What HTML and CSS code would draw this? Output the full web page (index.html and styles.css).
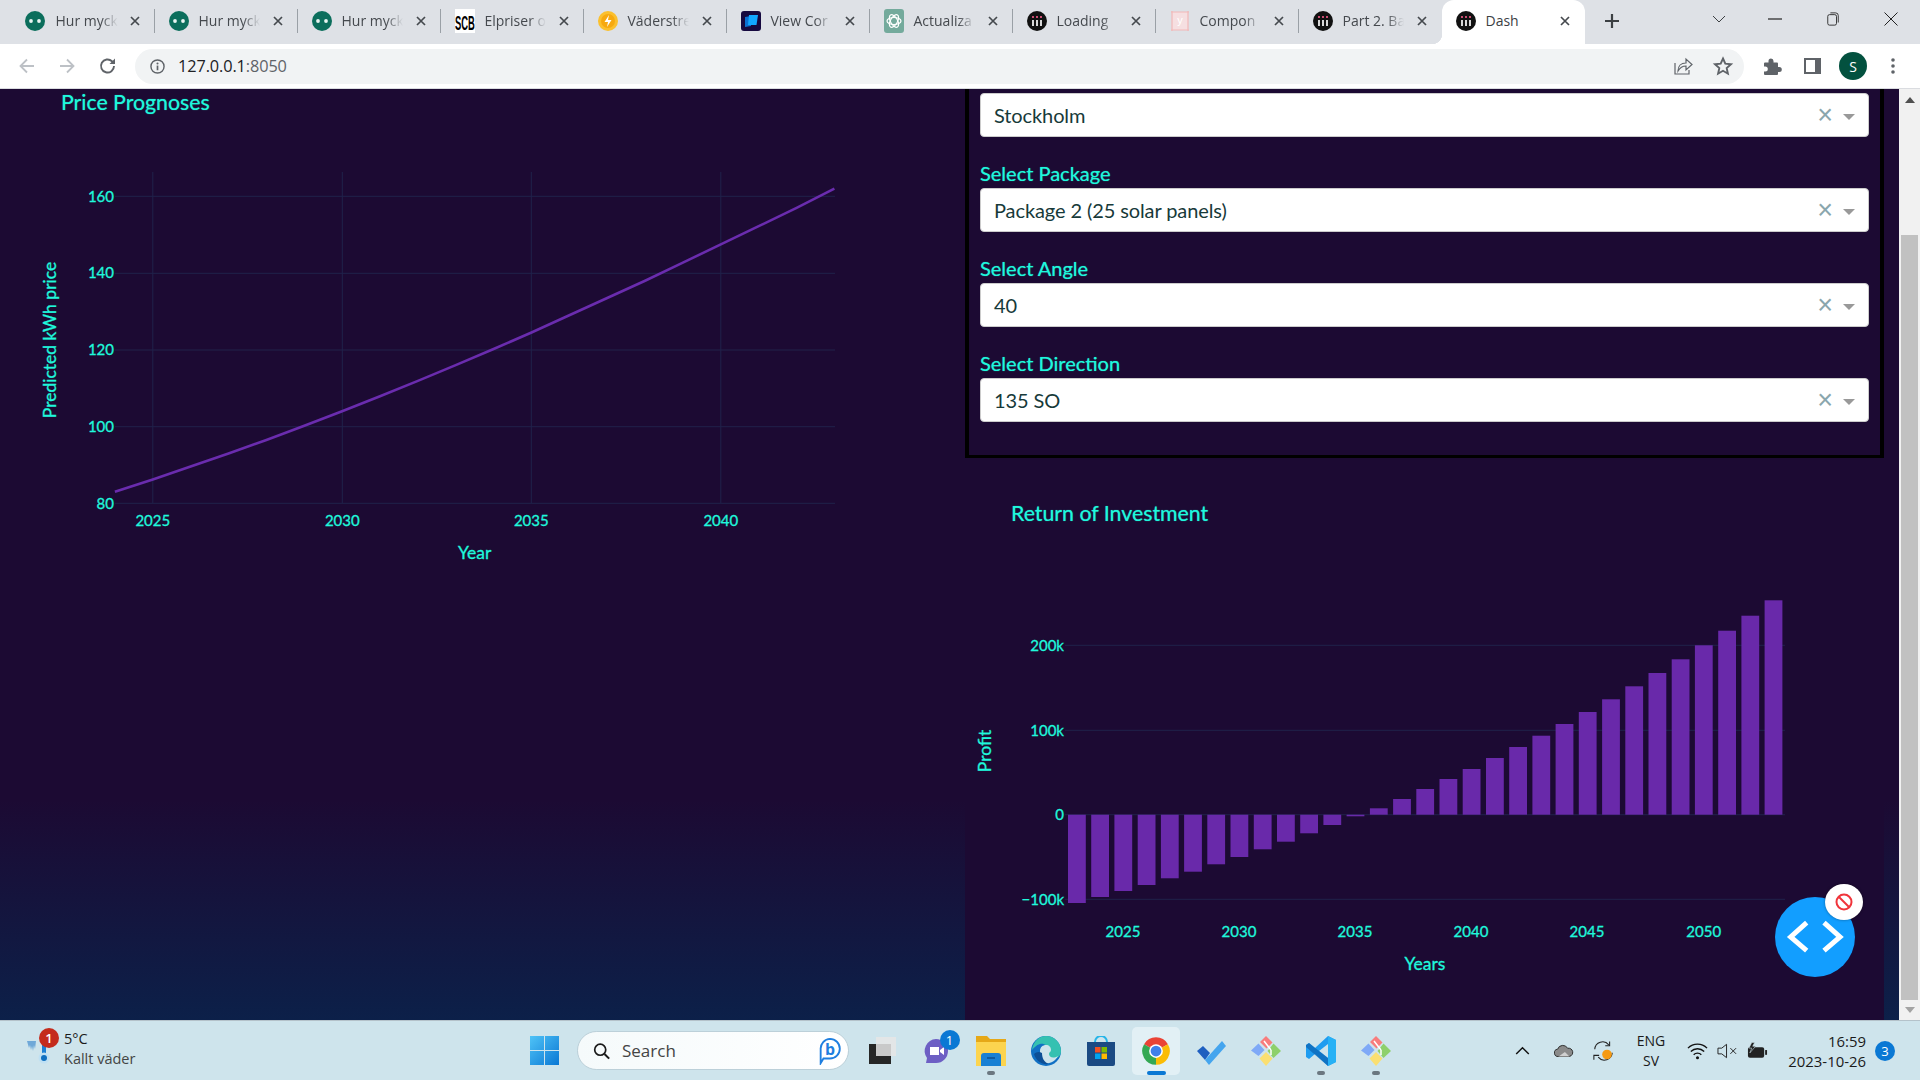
FILE: index.html
```html
<!DOCTYPE html>
<html lang="sv">
<head>
<meta charset="utf-8">
<title>Dash</title>
<link rel="stylesheet" href="styles.css">
</head>
<body>
<svg class="sprite" aria-hidden="true">
  <symbol id="i-robot" viewBox="0 0 20 20"><circle cx="10" cy="10" r="10" fill="#0b6e5c"/><circle cx="6" cy="10" r="1.900" fill="#e8f5f2"/><circle cx="14" cy="10" r="1.900" fill="#e8f5f2"/></symbol>
  <symbol id="i-dash" viewBox="0 0 20 20"><circle cx="10" cy="10" r="10" fill="#111"/><path d="M6 9v6M10 9v6M14 9v6" stroke="#eee" stroke-width="1.800"/><path d="M6 5v2M10 5v2M14 5v2" stroke="#e0557f" stroke-width="1.800"/></symbol>
  <symbol id="i-close" viewBox="0 0 10 10"><path d="M1 1l8 8M9 1l-8 8" stroke="#45494e" stroke-width="1.700"/></symbol>
  <symbol id="i-git" viewBox="0 0 30 30">
    <path d="M15 0l6.500 6.500-6 6-6.500-6.500z" fill="#f87d7d"/><path d="M7.500 7.500l6 6.500-6 6L0 14.500z" fill="#7fa9f7"/><path d="M22.500 7.500L30 15l-7.500 7-6-7z" fill="#8ed06b"/><path d="M15 16l6.500 6.500L15 30l-6.500-7.500z" fill="#fadf72"/>
    <path d="M13 5l7 9M20 14v5" stroke="#fff" stroke-width="1.500"/>
  </symbol>
</svg>

<div class="app">
  <header class="tabbar">
    <div class="tab tab-first"><svg class="fav"><use href="#i-robot"/></svg><span class="tab-title">Hur myck</span><svg class="tab-x"><use href="#i-close"/></svg></div>
    <div class="tab"><svg class="fav"><use href="#i-robot"/></svg><span class="tab-title">Hur myck</span><svg class="tab-x"><use href="#i-close"/></svg></div>
    <div class="tab"><svg class="fav"><use href="#i-robot"/></svg><span class="tab-title">Hur myck</span><svg class="tab-x"><use href="#i-close"/></svg></div>
    <div class="tab"><svg class="fav" viewBox="0 0 20 24"><rect width="20" height="24" fill="#fff"/><text class="scb" x="0" y="9.500" transform="scale(1 2.200)">SCB</text></svg><span class="tab-title">Elpriser o</span><svg class="tab-x"><use href="#i-close"/></svg></div>
    <div class="tab"><svg class="fav" viewBox="0 0 20 20"><circle cx="10" cy="10" r="10" fill="#fbc02d"/><circle cx="10" cy="10" r="7" fill="#f7a90f"/><path d="M11 4l-4.500 7H10l-1 5 4.500-7H10z" fill="#fff"/></svg><span class="tab-title">Väderstre</span><svg class="tab-x"><use href="#i-close"/></svg></div>
    <div class="tab"><svg class="fav" viewBox="0 0 20 20"><rect width="20" height="20" rx="3" fill="#16093f"/><path d="M4 6l6-1v10l-6 1z" fill="#0b6fd0"/><path d="M8 4h9l-1.500 10H7z" fill="#11a6ff"/></svg><span class="tab-title">View Cor</span><svg class="tab-x"><use href="#i-close"/></svg></div>
    <div class="tab"><svg class="fav" viewBox="0 0 20 24"><rect width="20" height="24" rx="3" fill="#74aa9c"/><g fill="none" stroke="#fff" stroke-width="1.200"><ellipse cx="10" cy="12" rx="7" ry="3.500"/><ellipse cx="10" cy="12" rx="7" ry="3.500" transform="rotate(60 10 12)"/><ellipse cx="10" cy="12" rx="7" ry="3.500" transform="rotate(120 10 12)"/></g></svg><span class="tab-title">Actualiza</span><svg class="tab-x"><use href="#i-close"/></svg></div>
    <div class="tab"><svg class="fav"><use href="#i-dash"/></svg><span class="tab-title">Loading</span><svg class="tab-x"><use href="#i-close"/></svg></div>
    <div class="tab"><svg class="fav" viewBox="0 0 20 24"><rect x="2" y="3" width="16" height="18" fill="#f6dfe1"/><path d="M1 3h18M1 21h18M2 2v20M18 2v20" stroke="#f2b8b8" stroke-width="1.200"/><text class="fav-y" x="10" y="15">y</text></svg><span class="tab-title">Compon</span><svg class="tab-x"><use href="#i-close"/></svg></div>
    <div class="tab tab-before-active"><svg class="fav"><use href="#i-dash"/></svg><span class="tab-title">Part 2. Ba</span><svg class="tab-x"><use href="#i-close"/></svg></div>
    <div class="tab tab-active"><svg class="fav"><use href="#i-dash"/></svg><span class="tab-title">Dash</span><svg class="tab-x"><use href="#i-close"/></svg></div>
    <svg class="newtab" viewBox="0 0 16 16"><path d="M8 1v14M1 8h14" stroke="#3c4043" stroke-width="2.200"/></svg>
    <div class="win">
      <svg class="win-chev" viewBox="0 0 14 8"><path d="M1 1l6 6 6-6" fill="none" stroke="#3c4043"/></svg>
      <span class="win-btn"><svg viewBox="0 0 14 14"><path d="M0 7h14" stroke="#222" stroke-width="1.200"/></svg></span>
      <span class="win-btn"><svg viewBox="0 0 14 16"><rect x="1" y="3" width="10" height="12" rx="2" fill="none" stroke="#222"/><path d="M4 1h6a3 3 0 0 1 3 3v8" fill="none" stroke="#222"/></svg></span>
      <span class="win-btn"><svg viewBox="0 0 14 14"><path d="M0.500 0.500l13 13M13.500 0.500l-13 13" stroke="#222"/></svg></span>
    </div>
  </header>

  <nav class="toolbar">
    <svg class="nav-ic" viewBox="0 0 20 20"><path d="M17 10H4M10 3.500L3.500 10l6.500 6.500" fill="none" stroke="#bdc1c6" stroke-width="1.800"/></svg>
    <svg class="nav-ic" viewBox="0 0 20 20"><path d="M3 10h13M10 3.500l6.500 6.500-6.500 6.500" fill="none" stroke="#bdc1c6" stroke-width="1.800"/></svg>
    <svg class="nav-ic nav-reload" viewBox="0 0 20 20"><path d="M16 10a6.500 6.500 0 1 1-2-4.700L16.500 7.500" fill="none" stroke="#5f6368" stroke-width="1.900"/><path d="M17 2.500V8h-5.500z" fill="#5f6368"/></svg>
    <div class="omnibox">
      <svg class="info" viewBox="0 0 16 16"><circle cx="8" cy="8" r="7" fill="none" stroke="#5f6368" stroke-width="1.500"/><path d="M8 7v5" stroke="#5f6368" stroke-width="1.800"/><circle cx="8" cy="4.700" r="1.100" fill="#5f6368"/></svg>
      <span class="url">127.0.0.1<span class="url-port">:8050</span></span>
      <svg class="omni-ic omni-first" viewBox="0 0 20 20"><path d="M2 7v11h14v-4" fill="none" stroke="#5f6368" stroke-width="1.200"/><path d="M5 15c0-5 3-8 8-8V3l6 5.500-6 5.500v-4c-3.500 0-6 1.500-8 5z" fill="none" stroke="#5f6368" stroke-width="1.200"/></svg>
      <svg class="omni-ic" viewBox="0 0 20 20"><path d="M10 2.500l2.300 5.200 5.700.6-4.300 3.800 1.200 5.600L10 14.800l-4.900 2.900 1.200-5.600L2 8.300l5.700-.6z" fill="none" stroke="#5f6368" stroke-width="1.900"/></svg>
    </div>
    <div class="tool-right">
      <svg class="tool-ic" viewBox="0 0 20 20"><path d="M2 7.500a1 1 0 0 1 1-1h3.500V5a2.500 2.500 0 0 1 5 0v1.500H15a1 1 0 0 1 1 1V11h1.300a2.500 2.500 0 0 1 0 5H16v2a1 1 0 0 1-1 1H3a1 1 0 0 1-1-1v-2.500h1.300a2.500 2.500 0 0 0 0-5H2z" fill="#5f6368"/></svg>
      <svg class="tool-ic" viewBox="0 0 20 20"><rect x="2" y="2" width="17" height="16" fill="#5f6368"/><rect x="4" y="4" width="9" height="12" fill="#fff"/></svg>
      <span class="avatar">S</span>
      <svg class="tool-ic" viewBox="0 0 20 20"><circle cx="10" cy="4" r="1.800" fill="#5f6368"/><circle cx="10" cy="10" r="1.800" fill="#5f6368"/><circle cx="10" cy="16" r="1.800" fill="#5f6368"/></svg>
    </div>
  </nav>

  <main class="viewport">
    <div class="page">
      <section class="col-left">
        <h3 class="chart-title title-left">Price Prognoses</h3>
        <svg class="chart-line" viewBox="0 117 965 500" role="img">
          <g class="grid">
            <path d="M115 196.300H835M115 273.300H835M115 350H835M115 426.700H835M115 503.300H835"/>
            <path d="M152.800 172V503.300M342.300 172V503.300M531.300 172V503.300M720.800 172V503.300"/>
          </g>
          <polyline class="trend" points="114.900,491.800 152.800,479.500 190.600,466.500 228.500,453.400 266.400,440 304.300,425.800 342.100,411.200 380,396.200 417.900,380.900 455.700,365.100 493.600,349 531.500,332.500 569.300,315.200 607.200,298 645.100,280.700 682.900,262.700 720.800,244.300 758.700,226.200 796.600,207.800 834.400,188.600"/>
          <g class="tick tick-y">
            <text x="114" y="201.500">160</text><text x="114" y="278">140</text><text x="114" y="355">120</text><text x="114" y="432">100</text><text x="114" y="508.500">80</text>
          </g>
          <g class="tick tick-x">
            <text x="152.800" y="526">2025</text><text x="342.300" y="526">2030</text><text x="531.300" y="526">2035</text><text x="720.800" y="526">2040</text>
          </g>
          <text class="axis" x="474.700" y="559">Year</text>
          <text class="axis" transform="translate(56 340) rotate(-90)">Predicted kWh price</text>
        </svg>
      </section>

      <section class="col-right">
        <div class="panel">
          <div class="select"><span>Stockholm</span><span class="select-x">×</span><span class="select-caret"></span></div>
          <label class="select-label">Select Package</label>
          <div class="select"><span>Package 2 (25 solar panels)</span><span class="select-x">×</span><span class="select-caret"></span></div>
          <label class="select-label">Select Angle</label>
          <div class="select"><span>40</span><span class="select-x">×</span><span class="select-caret"></span></div>
          <label class="select-label">Select Direction</label>
          <div class="select"><span>135 SO</span><span class="select-x">×</span><span class="select-caret"></span></div>
        </div>
        <h3 class="chart-title title-right">Return of Investment</h3>
        <svg class="chart-bars" viewBox="965 528 919 470" role="img">
          <g class="grid">
            <path d="M1065 645.300H1785M1065 730.300H1785M1065 814.700H1785M1065 899.300H1785"/>
          </g>
          <g class="bars">
            <rect x="1068" y="814.700" width="17.800" height="88.300"/>
            <rect x="1091.200" y="814.700" width="17.800" height="82.300"/>
            <rect x="1114.400" y="814.700" width="17.800" height="76.300"/>
            <rect x="1137.700" y="814.700" width="17.800" height="70.300"/>
            <rect x="1160.900" y="814.700" width="17.800" height="63.600"/>
            <rect x="1184.100" y="814.700" width="17.800" height="57"/>
            <rect x="1207.300" y="814.700" width="17.800" height="49.600"/>
            <rect x="1230.500" y="814.700" width="17.800" height="42.300"/>
            <rect x="1253.800" y="814.700" width="17.800" height="34.600"/>
            <rect x="1277" y="814.700" width="17.800" height="27"/>
            <rect x="1300.200" y="814.700" width="17.800" height="18.600"/>
            <rect x="1323.400" y="814.700" width="17.800" height="10.300"/>
            <rect x="1346.600" y="814.700" width="17.800" height="1.600"/>
            <rect x="1369.900" y="808.300" width="17.800" height="6.400"/>
            <rect x="1393.100" y="799" width="17.800" height="15.700"/>
            <rect x="1416.300" y="789" width="17.800" height="25.700"/>
            <rect x="1439.500" y="779" width="17.800" height="35.700"/>
            <rect x="1462.700" y="769" width="17.800" height="45.700"/>
            <rect x="1486" y="758" width="17.800" height="56.700"/>
            <rect x="1509.200" y="747" width="17.800" height="67.700"/>
            <rect x="1532.400" y="735.700" width="17.800" height="79"/>
            <rect x="1555.600" y="724" width="17.800" height="90.700"/>
            <rect x="1578.800" y="712" width="17.800" height="102.700"/>
            <rect x="1602.100" y="699.300" width="17.800" height="115.400"/>
            <rect x="1625.300" y="686.300" width="17.800" height="128.400"/>
            <rect x="1648.500" y="673" width="17.800" height="141.700"/>
            <rect x="1671.700" y="659.300" width="17.800" height="155.400"/>
            <rect x="1694.900" y="645.300" width="17.800" height="169.400"/>
            <rect x="1718.200" y="630.700" width="17.800" height="184"/>
            <rect x="1741.400" y="615.700" width="17.800" height="199"/>
            <rect x="1764.600" y="600.300" width="17.800" height="214.400"/>
          </g>
          <g class="tick tick-y">
            <text x="1064" y="650.500">200k</text><text x="1064" y="735.500">100k</text><text x="1064" y="820">0</text><text x="1064" y="904.500">−100k</text>
          </g>
          <g class="tick tick-x">
            <text x="1123" y="937">2025</text><text x="1239" y="937">2030</text><text x="1355" y="937">2035</text><text x="1471" y="937">2040</text><text x="1587" y="937">2045</text><text x="1703.700" y="937">2050</text>
          </g>
          <text class="axis" x="1425" y="970">Years</text>
          <text class="axis" transform="translate(991 751) rotate(-90)">Profit</text>
        </svg>
      </section>
      <div class="gutter"></div>
    </div>

    <aside class="scrollbar">
      <span class="sb-up"></span>
      <span class="sb-thumb"></span>
      <span class="sb-down"></span>
    </aside>

    <div class="fab">
      <svg class="fab-code" viewBox="0 0 80 80"><path d="M31.700 25.700L15.700 40l16 13.700M49 25.700L65 40 49 53.700" fill="none" stroke="#fff" stroke-width="5"/></svg>
      <span class="fab-chip"><svg viewBox="0 0 20 20"><circle cx="10" cy="10" r="7.500" fill="none" stroke="#f0353b" stroke-width="2"/><path d="M5 5l10 10" stroke="#f0353b" stroke-width="2"/></svg></span>
    </div>
  </main>

  <footer class="taskbar">
    <div class="weather">
      <div class="weather-icon">
        <svg viewBox="0 0 24 44"><path d="M0 12h9l-1 8-1-4-1 6-1-5-1 4-1-5-1 3z" fill="#6fa8d8"/><rect x="15" y="10" width="4" height="18" fill="#1b7fd4"/><circle cx="17" cy="29" r="5.500" fill="#bfe0f3"/><circle cx="17" cy="29" r="3" fill="#0f6fc0"/></svg>
        <span class="weather-badge">1</span>
      </div>
      <div class="weather-text"><span class="temp">5°C</span><span class="cond">Kallt väder</span></div>
    </div>
    <svg class="start" viewBox="0 0 29 29">
      <defs><linearGradient id="winblue" x1="0" y1="0" x2="1" y2="1"><stop offset="0" stop-color="#4fc3f7"/><stop offset="1" stop-color="#0a78d4"/></linearGradient></defs>
      <path d="M0 0h14v14H0zM15 0h14v14H15zM0 15h14v14H0zM15 15h14v14H15z" fill="url(#winblue)"/>
    </svg>
    <div class="search">
      <svg class="search-ic" viewBox="0 0 20 20"><circle cx="8.500" cy="8.500" r="6.500" fill="none" stroke="#1a1a1a" stroke-width="2"/><path d="M13.500 13.500L19 19" stroke="#1a1a1a" stroke-width="2.400"/></svg>
      <span class="search-text">Search</span>
      <svg class="bing" viewBox="0 0 24 30"><path d="M12 2a10.500 10.500 0 0 1 0 21H5l-3 5v-15A10.500 10.500 0 0 1 12 2z" fill="#fff" stroke="#1f7fe0" stroke-width="2"/><text class="bing-b" x="12" y="19">b</text></svg>
    </div>
    <div class="apps">
      <span class="app-btn"><svg viewBox="0 0 30 30"><rect x="3" y="8" width="22" height="20" fill="#262626"/><rect x="10" y="1" width="20" height="19" fill="#e6e6e6" fill-opacity=".85"/></svg></span>
      <span class="app-btn"><svg viewBox="0 0 30 30"><path d="M15 3a12 12 0 0 1 0 24H5l1-5a12 12 0 0 1 9-19z" fill="#6d5fc4"/><path d="M9 11h9v8H9zM19 14l4-3v8l-4-3z" fill="#fff"/></svg><span class="app-badge">1</span></span>
      <span class="app-btn app-dot"><svg viewBox="0 0 30 30"><path d="M0 0h11l3 3h16v27H0z" fill="#e6a817"/><path d="M0 6h30v24H0z" fill="#fcd44f"/><path d="M5 20a3 3 0 0 1 3-3h14a3 3 0 0 1 3 3v10H5z" fill="#1880d4"/><path d="M11 22h8" stroke="#0b4f90" stroke-width="1.500"/></svg></span>
      <span class="app-btn"><svg viewBox="0 0 30 30"><circle cx="15" cy="15" r="15" fill="#1170c4"/><path d="M15 0a15 15 0 0 1 15 15c0 6-5 8-9 8-3 0-6-1-6-4 0-2 2-3 2-6S13 7 9 8C5 9 3 12 1 14 2 6 8 0 15 0z" fill="#35c1b1"/><path d="M9 15c0-4 3-6 6-6s5 2 5 5c0 2-2 2-2 4 0 3 4 5 9 2-3 6-9 8-13 7-4-2-5-8-5-12z" fill="#cee4ec"/><path d="M11 17c0 5 2 9 7 11-7 1-13-3-15-10 2-2 5-3 8-1z" fill="#0d4f96"/></svg></span>
      <span class="app-btn"><svg viewBox="0 0 30 30"><path d="M9 6a6 6 0 0 1 12 0" fill="none" stroke="#26b5e8" stroke-width="2"/><path d="M1 6h28v22a2 2 0 0 1-2 2H3a2 2 0 0 1-2-2z" fill="#1b4a83"/><path d="M9 11h5.500v5.500H9z" fill="#f25022"/><path d="M15.500 11H21v5.500h-5.500z" fill="#7fba00"/><path d="M9 17.500h5.500V23H9z" fill="#00a4ef"/><path d="M15.500 17.500H21V23h-5.500z" fill="#ffb900"/></svg></span>
      <span class="app-btn app-active"><svg viewBox="0 0 24 24"><path d="M12 12L2.470 6.500A11 11 0 0 1 21.530 6.500Z" fill="#ea4335"/><path d="M12 12L21.530 6.500A11 11 0 0 1 12 23Z" fill="#fbbc05"/><path d="M12 12L12 23A11 11 0 0 1 2.470 6.500Z" fill="#34a853"/><circle cx="12" cy="12" r="5.500" fill="#fff"/><circle cx="12" cy="12" r="4.300" fill="#3f80ea"/></svg></span>
      <span class="app-btn"><svg viewBox="0 0 30 30"><path d="M1 15l6-5 7 7-5 7z" fill="#1f5fc0"/><path d="M9 24L26 5l4 5-17 19z" fill="#45a5ee"/></svg></span>
      <span class="app-btn"><svg><use href="#i-git"/></svg></span>
      <span class="app-btn app-dot"><svg viewBox="0 0 30 30"><path d="M22 0l8 4v22l-8 4-13-12-6 5-3-2v-12l3-2 6 5z" fill="#1f9cf0"/><path d="M22 8l-9 7 9 7z" fill="#cfe4ec"/><path d="M22 0v30l8-4V4z" fill="#27b1f5"/><path d="M0 9l3-2 19 15v8L0 11z" fill="#0a63b0" fill-opacity=".7"/></svg></span>
      <span class="app-btn app-dot"><svg><use href="#i-git"/></svg></span>
    </div>
    <div class="tray">
      <svg class="tray-caret" viewBox="0 0 16 10"><path d="M1 9l7-7 7 7" fill="none" stroke="#111" stroke-width="1.600"/></svg>
      <svg class="tray-cloud" viewBox="0 0 22 14"><path d="M5 13a4 4 0 0 1-1-8 6 6 0 0 1 11-1 4.500 4.500 0 0 1 2 9z" fill="#8a8a8a" stroke="#222"/><path d="M5 13l7-5 5 5z" fill="#d0d0d0"/></svg>
      <svg class="tray-sync" viewBox="0 0 24 24"><path d="M2 10a9 9 0 0 1 16-5M22 14a9 9 0 0 1-16 5" fill="none" stroke="#222" stroke-width="1.200"/><path d="M19 1v5h-5M1 22v-5h6" fill="none" stroke="#222" stroke-width="1.200"/><circle cx="16" cy="16" r="5.500" fill="#f59a13"/></svg>
      <div class="lang"><span>ENG</span><span>SV</span></div>
      <svg class="tray-ic tray-wifi" viewBox="0 0 22 18"><path d="M1 6a14 14 0 0 1 20 0M4 9.500a10 10 0 0 1 14 0M7 13a5.500 5.500 0 0 1 8 0" fill="none" stroke="#111" stroke-width="1.400"/><circle cx="11" cy="16" r="1.600" fill="#111"/></svg>
      <svg class="tray-ic" viewBox="0 0 22 18"><path d="M1 6h4l5-4v14l-5-4H1z" fill="none" stroke="#222"/><path d="M14 6l6 6M20 6l-6 6" stroke="#222"/></svg>
      <svg class="tray-ic" viewBox="0 0 22 18"><rect x="1" y="5" width="17" height="11" rx="2" fill="#222"/><path d="M19 8h2v5h-2z" fill="#222"/><path d="M5 0L2 6h3l-2 5 6-7H6l2-4z" fill="#222" stroke="#cfe4ec" stroke-width=".6"/></svg>
      <div class="clock"><span>16:59</span><span>2023-10-26</span></div>
      <span class="notif">3</span>
    </div>
  </footer>
</div>
</body>
</html>
```

FILE: styles.css
```css
* { box-sizing: border-box; }
html, body { margin: 0; height: 100%; overflow: hidden; }
body { font-family: Lato, "Open Sans", sans-serif; background: #1c0a33; }
.sprite { display: none; }

.app { width: 1920px; height: 1080px; display: flex; flex-direction: column; }

/* Browser tab strip */
.tabbar { height: 44px; flex: none; display: flex; background: #dee1e6; padding-left: 11.5px; font-family: "Open Sans", sans-serif; }
.tab { width: 143px; height: 44px; flex: none; display: flex; align-items: center; padding: 0 15px 2px 14.6px; position: relative; color: #45494e; }
.tab-first { padding-left: 13px; }
.tab::after { content: ""; position: absolute; right: 0; top: 9px; height: 24px; width: 1px; background: #9aa0a6; }
.tab-before-active::after, .tab-active::after { display: none; }
.tab-active { background: #fff; border-radius: 12px 12px 0 0; color: #3c4043; }
.tab-active::before { content: ""; position: absolute; left: -10px; bottom: 0; width: 10px; height: 10px; background: radial-gradient(circle at 0 0, transparent 10px, #fff 10.500px); }
.fav { width: 20px; height: 24px; flex: none; }
.tab-title { margin: -2px 0 0 9.400px; flex: none; font-size: 14px; white-space: nowrap; -webkit-mask-image: linear-gradient(90deg, #000 45px, transparent 62px); mask-image: linear-gradient(90deg, #000 45px, transparent 62px); }
.tab-first .tab-title { margin-left: 11px; }
.tab-active .tab-title { -webkit-mask-image: none; mask-image: none; }
.tab-x { margin-left: auto; width: 10px; height: 10px; flex: none; }
.scb { font: 700 9.400px "Liberation Sans", sans-serif; fill: #000; }
.fav-y { font: 11px "Liberation Sans", sans-serif; fill: #fff; text-anchor: middle; }
.newtab { width: 16px; height: 16px; flex: none; margin: 13px 0 0 19.500px; }
.win { margin-left: auto; display: flex; align-items: flex-start; }
.win-chev { width: 14px; height: 8px; margin: 15px 20px 0 0; }
.win-btn { width: 58px; height: 38px; display: flex; align-items: center; justify-content: center; }
.win-btn svg { width: 14px; height: 14px; }

/* Address bar */
.toolbar { height: 45px; flex: none; display: flex; align-items: center; background: #fff; padding: 0 7px 0 7px; border-bottom: 1px solid #dadce0; }
.nav-ic { width: 40px; height: 20px; flex: none; }
.nav-reload { margin-left: 1px; }
.omnibox { flex: 1; height: 35px; margin-left: 7px; background: #f1f3f4; border-radius: 18px; display: flex; align-items: center; padding: 0 1px 0 15px; font-family: "Open Sans", sans-serif; }
.info { width: 15px; height: 15px; flex: none; }
.url { margin-left: 13px; font-size: 16.300px; color: #202124; letter-spacing: -.1px; }
.url-port { color: #5f6368; }
.omni-ic { width: 40px; height: 20px; flex: none; }
.omni-first { margin-left: auto; }
.tool-right { display: flex; align-items: center; margin-left: 8px; }
.tool-ic { width: 40px; height: 20px; flex: none; }
.avatar { width: 28px; height: 28px; margin: 0 6px 0 7px; border-radius: 50%; background: #03513f; color: #fff; font-size: 14px; display: flex; align-items: center; justify-content: center; font-family: "Open Sans", sans-serif; }

/* Page */
.viewport { flex: 1; min-height: 0; display: flex; position: relative; overflow: hidden; }
.page { flex: 1; display: flex; background: linear-gradient(180deg, #1c0a33 0, #1c0a33 711px, #0c2049 931px); }
.col-left { width: 965px; flex: none; }
.col-right { width: 919px; flex: none; background: #1c0a33; }
.gutter { flex: 1; }
.chart-title { margin: 0 0 2px; font-size: 21.300px; line-height: 26px; font-weight: 400; color: #1ff8dc; text-shadow: 0 0 1px rgba(31, 248, 220, .7); }
.title-left { padding-left: 61px; }
.title-right { padding-left: 46px; margin-top: 42px; }
.chart-line { display: block; width: 965px; height: 500px; }
.chart-bars { display: block; width: 919px; height: 470px; }
.grid path { fill: none; stroke: #20224a; stroke-width: 1; }
.trend { fill: none; stroke: #6a2cae; stroke-width: 2.600; }
.bars rect { fill: #6929aa; }
.tick text { font-family: Lato, sans-serif; font-size: 15px; fill: #1ff8dc; stroke: #1ff8dc; stroke-width: .3px; }
.tick-y text { text-anchor: end; }
.tick-x text { text-anchor: middle; }
.axis { font-family: Lato, sans-serif; font-size: 17.500px; fill: #1ff8dc; stroke: #1ff8dc; stroke-width: .3px; text-anchor: middle; }

.panel { width: 919px; height: 369px; padding: 4px 11px 0; border: solid #000; border-width: 0 4px 3px; }
.select { height: 44px; background: #fff; border: 1px solid #ccc; border-radius: 4px; display: flex; align-items: center; padding: 0 13px 0 13px; font-size: 20px; letter-spacing: -.1px; color: #173a3a; }
.select-x { margin-left: auto; font: 27px "Liberation Sans", sans-serif; color: #8aa6ad; line-height: 1; }
.select-caret { margin: 3px 0 0 10px; width: 0; height: 0; border: solid transparent; border-width: 6px 6px 0; border-top-color: #999; }
.select-label { display: block; height: 51px; padding-top: 22px; font-size: 20px; line-height: 28px; color: #1ff8dc; text-shadow: 0 0 1px rgba(31, 248, 220, .7); }

/* Scrollbar */
.scrollbar { width: 21px; flex: none; background: #f1f1f1; display: flex; flex-direction: column; align-items: center; }
.sb-up { flex: none; border: solid transparent; border-width: 0 5px 6px; border-bottom-color: #505050; width: 0; margin-top: 8px; height: 0; }
.sb-thumb { width: 17px; height: 765px; margin-top: 132px; background: #c1c1c1; flex: none; }
.sb-down { width: 0; height: 0; margin-top: 7px; border: solid transparent; border-width: 6px 5px 0; border-top-color: #a3a3a3; }

/* Floating button */
.fab { position: absolute; left: 1775px; top: 808px; width: 80px; height: 80px; border-radius: 50%; background: #129eff; }
.fab-code { width: 80px; height: 80px; display: block; }
.fab-chip { position: absolute; left: 50px; top: -13px; width: 38px; height: 36px; border-radius: 50%; background: #fff; display: flex; align-items: center; justify-content: center; box-shadow: 0 0 3px rgba(0, 0, 0, .4); }
.fab-chip svg { width: 20px; height: 20px; }

/* Taskbar */
.taskbar { height: 60px; flex: none; display: flex; align-items: center; background: #cee4ec; border-top: 1px solid #b4c2ca; font-family: "Open Sans", sans-serif; color: #1a1a1a; }
.weather { width: 530px; flex: none; display: flex; padding-left: 27px; }
.weather-icon { width: 24px; height: 44px; position: relative; flex: none; }
.weather-icon svg { width: 24px; height: 44px; display: block; }
.weather-badge { position: absolute; left: 12px; top: -1px; width: 20px; height: 20px; border-radius: 50%; background: #c42b1c; color: #fff; font-size: 13px; font-weight: 600; display: flex; align-items: center; justify-content: center; }
.weather-text { display: flex; flex-direction: column; margin-left: 13px; font-size: 14.500px; line-height: 20px; }
.cond { color: #444; }
.start { width: 29px; height: 29px; flex: none; margin-right: 18px; }
.search { width: 272px; height: 39px; flex: none; border-radius: 20px; background: linear-gradient(90deg, #f5fafb, #fff); border: 1px solid #bcd0d9; display: flex; align-items: center; padding: 0 6px 0 15px; }
.search-ic { width: 17px; height: 18px; flex: none; }
.search-text { margin-left: 12px; font-size: 17px; color: #444; }
.bing { width: 24px; height: 28px; margin-left: auto; flex: none; }
.bing-b { font: 700 17px "Open Sans", sans-serif; fill: #1f7fe0; text-anchor: middle; }
.apps { display: flex; margin-left: 4.500px; }
.app-btn { width: 55px; height: 48px; flex: none; display: flex; align-items: center; justify-content: center; position: relative; }
.app-btn svg { width: 30px; height: 30px; display: block; }
.app-badge { position: absolute; left: 31px; top: 3px; width: 20px; height: 20px; border-radius: 50%; background: #0a78d4; color: #fff; font-size: 13px; display: flex; align-items: center; justify-content: center; }
.app-dot::after { content: ""; position: absolute; left: 23.500px; bottom: 0; width: 8px; height: 4px; border-radius: 2px; background: #6b7780; }
.app-active { background: #e2f0f5; border-radius: 5px; margin: 0 3.500px; width: 48px; }
.app-active::after { content: ""; position: absolute; left: 14.500px; bottom: 0; width: 19px; height: 4px; border-radius: 2px; background: #0a78d4; }
.tray { margin-left: auto; display: flex; align-items: center; padding-right: 25px; }
.tray-caret { width: 15px; height: 9px; flex: none; }
.tray-cloud { width: 20px; height: 14px; margin-left: 24px; flex: none; }
.tray-sync { width: 21px; height: 22px; margin-left: 19px; flex: none; }
.lang { width: 50px; margin-left: 12px; display: flex; flex-direction: column; align-items: center; font-size: 14px; line-height: 20px; }
.tray-ic { width: 21px; height: 18px; margin-left: 9px; flex: none; }
.tray-wifi { margin-left: 11px; }
.clock { width: 90px; margin-left: 8px; display: flex; flex-direction: column; align-items: flex-end; font-size: 14.900px; line-height: 20px; }
.notif { width: 20px; height: 20px; margin-left: 9px; border-radius: 50%; background: #0a78d4; color: #fff; font-size: 13px; display: flex; align-items: center; justify-content: center; }
```
